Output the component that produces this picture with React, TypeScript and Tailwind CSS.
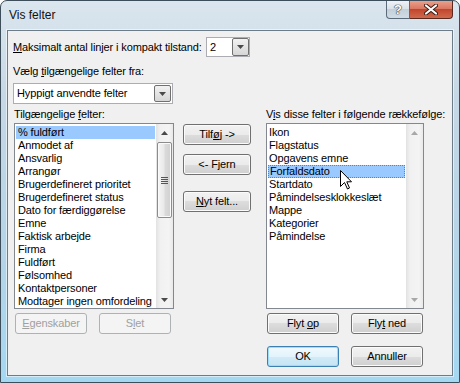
import React from "react";

const leftItems = [
  "% fuldført",
  "Anmodet af",
  "Ansvarlig",
  "Arrangør",
  "Brugerdefineret prioritet",
  "Brugerdefineret status",
  "Dato for færdiggørelse",
  "Emne",
  "Faktisk arbejde",
  "Firma",
  "Fuldført",
  "Følsomhed",
  "Kontaktpersoner",
  "Modtager ingen omfordeling",
];

const rightItems = [
  "Ikon",
  "Flagstatus",
  "Opgavens emne",
  "Forfaldsdato",
  "Startdato",
  "Påmindelsesklokkeslæt",
  "Mappe",
  "Kategorier",
  "Påmindelse",
];

const U = ({ c }: { c: string }) => <span className="underline decoration-1 underline-offset-[1px]">{c}</span>;

type BtnProps = {
  children: React.ReactNode;
  disabled?: boolean;
  primary?: boolean;
  className?: string;
};

const Btn = ({ children, disabled, primary, className = "" }: BtnProps) => {
  let look =
    "border-[#707070] bg-[linear-gradient(#f2f2f2_0%,#ebebeb_50%,#dddddd_50%,#cfcfcf_100%)] shadow-[inset_0_0_0_1px_#fbfbfb] text-black";
  if (disabled) look = "border-[#adb2b5] bg-[#f4f4f4] text-[#a0a0a0]";
  if (primary)
    look =
      "border-[#3c7fb1] bg-[linear-gradient(#f1f9fd_0%,#e3f3fb_50%,#d2ebf7_50%,#c4e4f4_100%)] shadow-[inset_0_0_0_1px_#9fdcf9] text-black";
  return (
    <div className={`flex h-[21px] items-center justify-center rounded-[3px] border text-[11px] leading-[13px] ${look} ${className}`}>
      <span className="whitespace-pre">{children}</span>
    </div>
  );
};

const Arrow = ({ up, dim }: { up?: boolean; dim?: boolean }) => (
  <svg width="7" height="4" viewBox="0 0 7 4">
    <path d={up ? "M3.5 0L7 4L0 4Z" : "M0 0L7 0L3.5 4Z"} fill={dim ? "#a8a8a8" : "#4a4a4a"} />
  </svg>
);

const DropBtn = () => (
  <div className="flex h-full w-[17px] items-center justify-center rounded-[2px] border border-[#707070] bg-[linear-gradient(#f2f2f2,#e4e4e4_50%,#d6d6d6)]">
    <Arrow />
  </div>
);

const ScrollBar = ({ disabled }: { disabled?: boolean }) => (
  <div className="flex h-full w-[17px] flex-col bg-[linear-gradient(90deg,#e2e2e2,#f1f1f1_25%,#f4f4f4_75%,#e9e9e9)]">
    <div className="flex h-[17px] items-center justify-center">
      <Arrow up dim={disabled} />
    </div>
    <div className="flex-1">
      {!disabled && (
        <div className="mx-[1px] mt-[1px] flex h-[76px] items-center justify-center rounded-[2px] border border-[#8c8c8c] bg-[linear-gradient(90deg,#f6f6f6,#e9e9e9_45%,#dadada_55%,#d0d0d0)] shadow-[inset_0_0_0_1px_#fafafa]">
          <div className="flex flex-col gap-[1px]">
            <div className="h-px w-[7px] bg-[#555]" />
            <div className="h-px w-[7px] bg-[#555]" />
            <div className="h-px w-[7px] bg-[#555]" />
            <div className="h-px w-[7px] bg-[#555]" />
          </div>
        </div>
      )}
    </div>
    <div className="flex h-[17px] items-center justify-center">
      <Arrow dim={disabled} />
    </div>
  </div>
);

const App = () => {
  return (
    <div className="h-[383px] w-[460px] bg-white font-['Liberation_Sans',Arial,sans-serif] text-[11px] leading-[13px] tracking-[-0.12px] text-black">
      <div className="relative flex h-[383px] w-[460px] flex-col rounded-t-[7px] border border-[#3d4d59] bg-[linear-gradient(180deg,#dbe6ee_0%,#c6d8e5_25%,#b3d4e8_70%,#a4d8f2_100%)]">
        {/* title bar */}
        <div className="flex h-[29px] items-start justify-between">
          <div className="pl-[8px] pt-[7px] text-[12px] leading-[14px] tracking-normal text-[#111]">Vis felter</div>
          <div className="mr-[6px] flex">
            <div className="flex h-[18px] w-[24px] items-center justify-center rounded-bl-[4px] border border-t-0 border-[#5a6a78] bg-[linear-gradient(#eef3f7,#d7e1e8_50%,#c3d0da_50%,#d1dde5)] text-[13px] font-bold leading-[13px] text-white [text-shadow:0_0_1px_#334,0_0_1px_#334,0_0_1px_#334]">
              ?
            </div>
            <div className="flex h-[18px] w-[43px] items-center justify-center rounded-br-[4px] border border-l-0 border-t-0 border-[#5a2a20] bg-[linear-gradient(#eaa08e,#d9735c_50%,#c2462d_50%,#d06a4c)]">
              <svg width="14" height="11" viewBox="0 0 14 11">
                <path d="M2 1.5L12 9.5M12 1.5L2 9.5" stroke="#3a1a12" strokeWidth="4" strokeLinecap="round" />
                <path d="M2 1.5L12 9.5M12 1.5L2 9.5" stroke="#ffffff" strokeWidth="2.2" strokeLinecap="round" />
              </svg>
            </div>
          </div>
        </div>

        {/* client area */}
        <div className="mx-[6px] mb-[6px] flex flex-1 flex-col border border-[#6c7c88] bg-[#f0f0f0] shadow-[0_0_0_1px_rgba(255,255,255,0.55)]">
          <div className="flex flex-col pl-[5px]">
            <div className="mt-[6px] flex h-[20px] items-center">
              <div className="w-[193px] whitespace-nowrap">
                <U c="M" />aksimalt antal linjer i kompakt tilstand:
              </div>
              <div className="flex h-[20px] w-[44px] items-stretch border border-[#abadb3] bg-white">
                <div className="flex-1 pl-[3px] leading-[18px]">2</div>
                <DropBtn />
              </div>
            </div>

            <div className="mt-[8px] h-[13px] whitespace-nowrap">
              Vælg <U c="t" />ilgængelige felter fra:
            </div>

            <div className="mt-[5px] flex h-[21px] w-[160px] items-stretch border border-[#abadb3] bg-white p-[1px]">
              <div className="flex-1 pl-[2px] leading-[17px]">Hyppigt anvendte felter</div>
              <DropBtn />
            </div>
          </div>

          <div className="flex pl-[6px]">
            {/* left column */}
            <div className="flex w-[160px] flex-col">
              <div className="mt-[4px] h-[13px]">
                Tilgængelige <U c="f" />elter:
              </div>
              <div className="mt-[2px] flex h-[186px] border border-[#828790] bg-white">
                <div className="flex-1 pt-[2px]">
                  {leftItems.map((t, i) => (
                    <div
                      key={t}
                      className={`mx-[1px] h-[13px] whitespace-nowrap pl-[2px] ${i === 0 ? "bg-[#99c9ff]" : ""}`}
                    >
                      {t}
                    </div>
                  ))}
                </div>
                <ScrollBar />
              </div>
              <div className="ml-[1px] mt-[4px] flex gap-[12px]">
                <Btn disabled className="w-[72px]">
                  <U c="E" />genskaber
                </Btn>
                <Btn disabled className="w-[72px]">
                  S<U c="l" />et
                </Btn>
              </div>
            </div>

            {/* middle buttons */}
            <div className="ml-[9px] flex w-[68px] flex-col">
              <Btn className="mt-[20px]">
                Tilf<U c="ø" />j -&gt;
              </Btn>
              <Btn className="mt-[9px]">
                &lt;- F<U c="j" />ern
              </Btn>
              <Btn className="mt-[16px]">
                <U c="N" />yt felt...
              </Btn>
            </div>

            {/* right column */}
            <div className="ml-[15px] flex w-[158px] flex-col">
              <div className="mt-[4px] h-[13px] whitespace-nowrap">
                V<U c="i" />s disse felter i følgende rækkefølge:
              </div>
              <div className="relative mt-[2px] flex h-[186px] border border-[#828790] bg-white">
                <div className="flex-1 pt-[2px]">
                  {rightItems.map((t, i) => (
                    <div
                      key={t}
                      className={`mx-[1px] h-[13px] whitespace-nowrap pl-[1px] ${
                        i === 3 ? "border border-dotted border-[#a87438] bg-[#99c9ff] pl-0 leading-[11px]" : ""
                      }`}
                    >
                      {t}
                    </div>
                  ))}
                </div>
                <ScrollBar disabled />
                {/* mouse pointer */}
                <svg className="absolute left-[73px] top-[46px]" width="12" height="20" viewBox="0 0 12 20">
                  <path
                    d="M0.5 0.5L0.5 16.5L4.5 12.5L7.5 19L9.5 18L6.8 11.8L11.5 11.8Z"
                    fill="#ffffff"
                    stroke="#000000"
                    strokeWidth="1"
                    strokeLinejoin="round"
                  />
                </svg>
              </div>
              <div className="ml-[1px] mt-[4px] flex gap-[12px]">
                <Btn className="w-[72px]">
                  Flyt <U c="o" />p
                </Btn>
                <Btn className="w-[72px]">
                  Fly<U c="t" /> ned
                </Btn>
              </div>
              <div className="ml-[1px] mt-[12px] flex gap-[12px]">
                <Btn primary className="w-[72px]">
                  OK
                </Btn>
                <Btn className="w-[72px]">Annuller</Btn>
              </div>
            </div>
          </div>
        </div>
      </div>
    </div>
  );
};

export default App;
